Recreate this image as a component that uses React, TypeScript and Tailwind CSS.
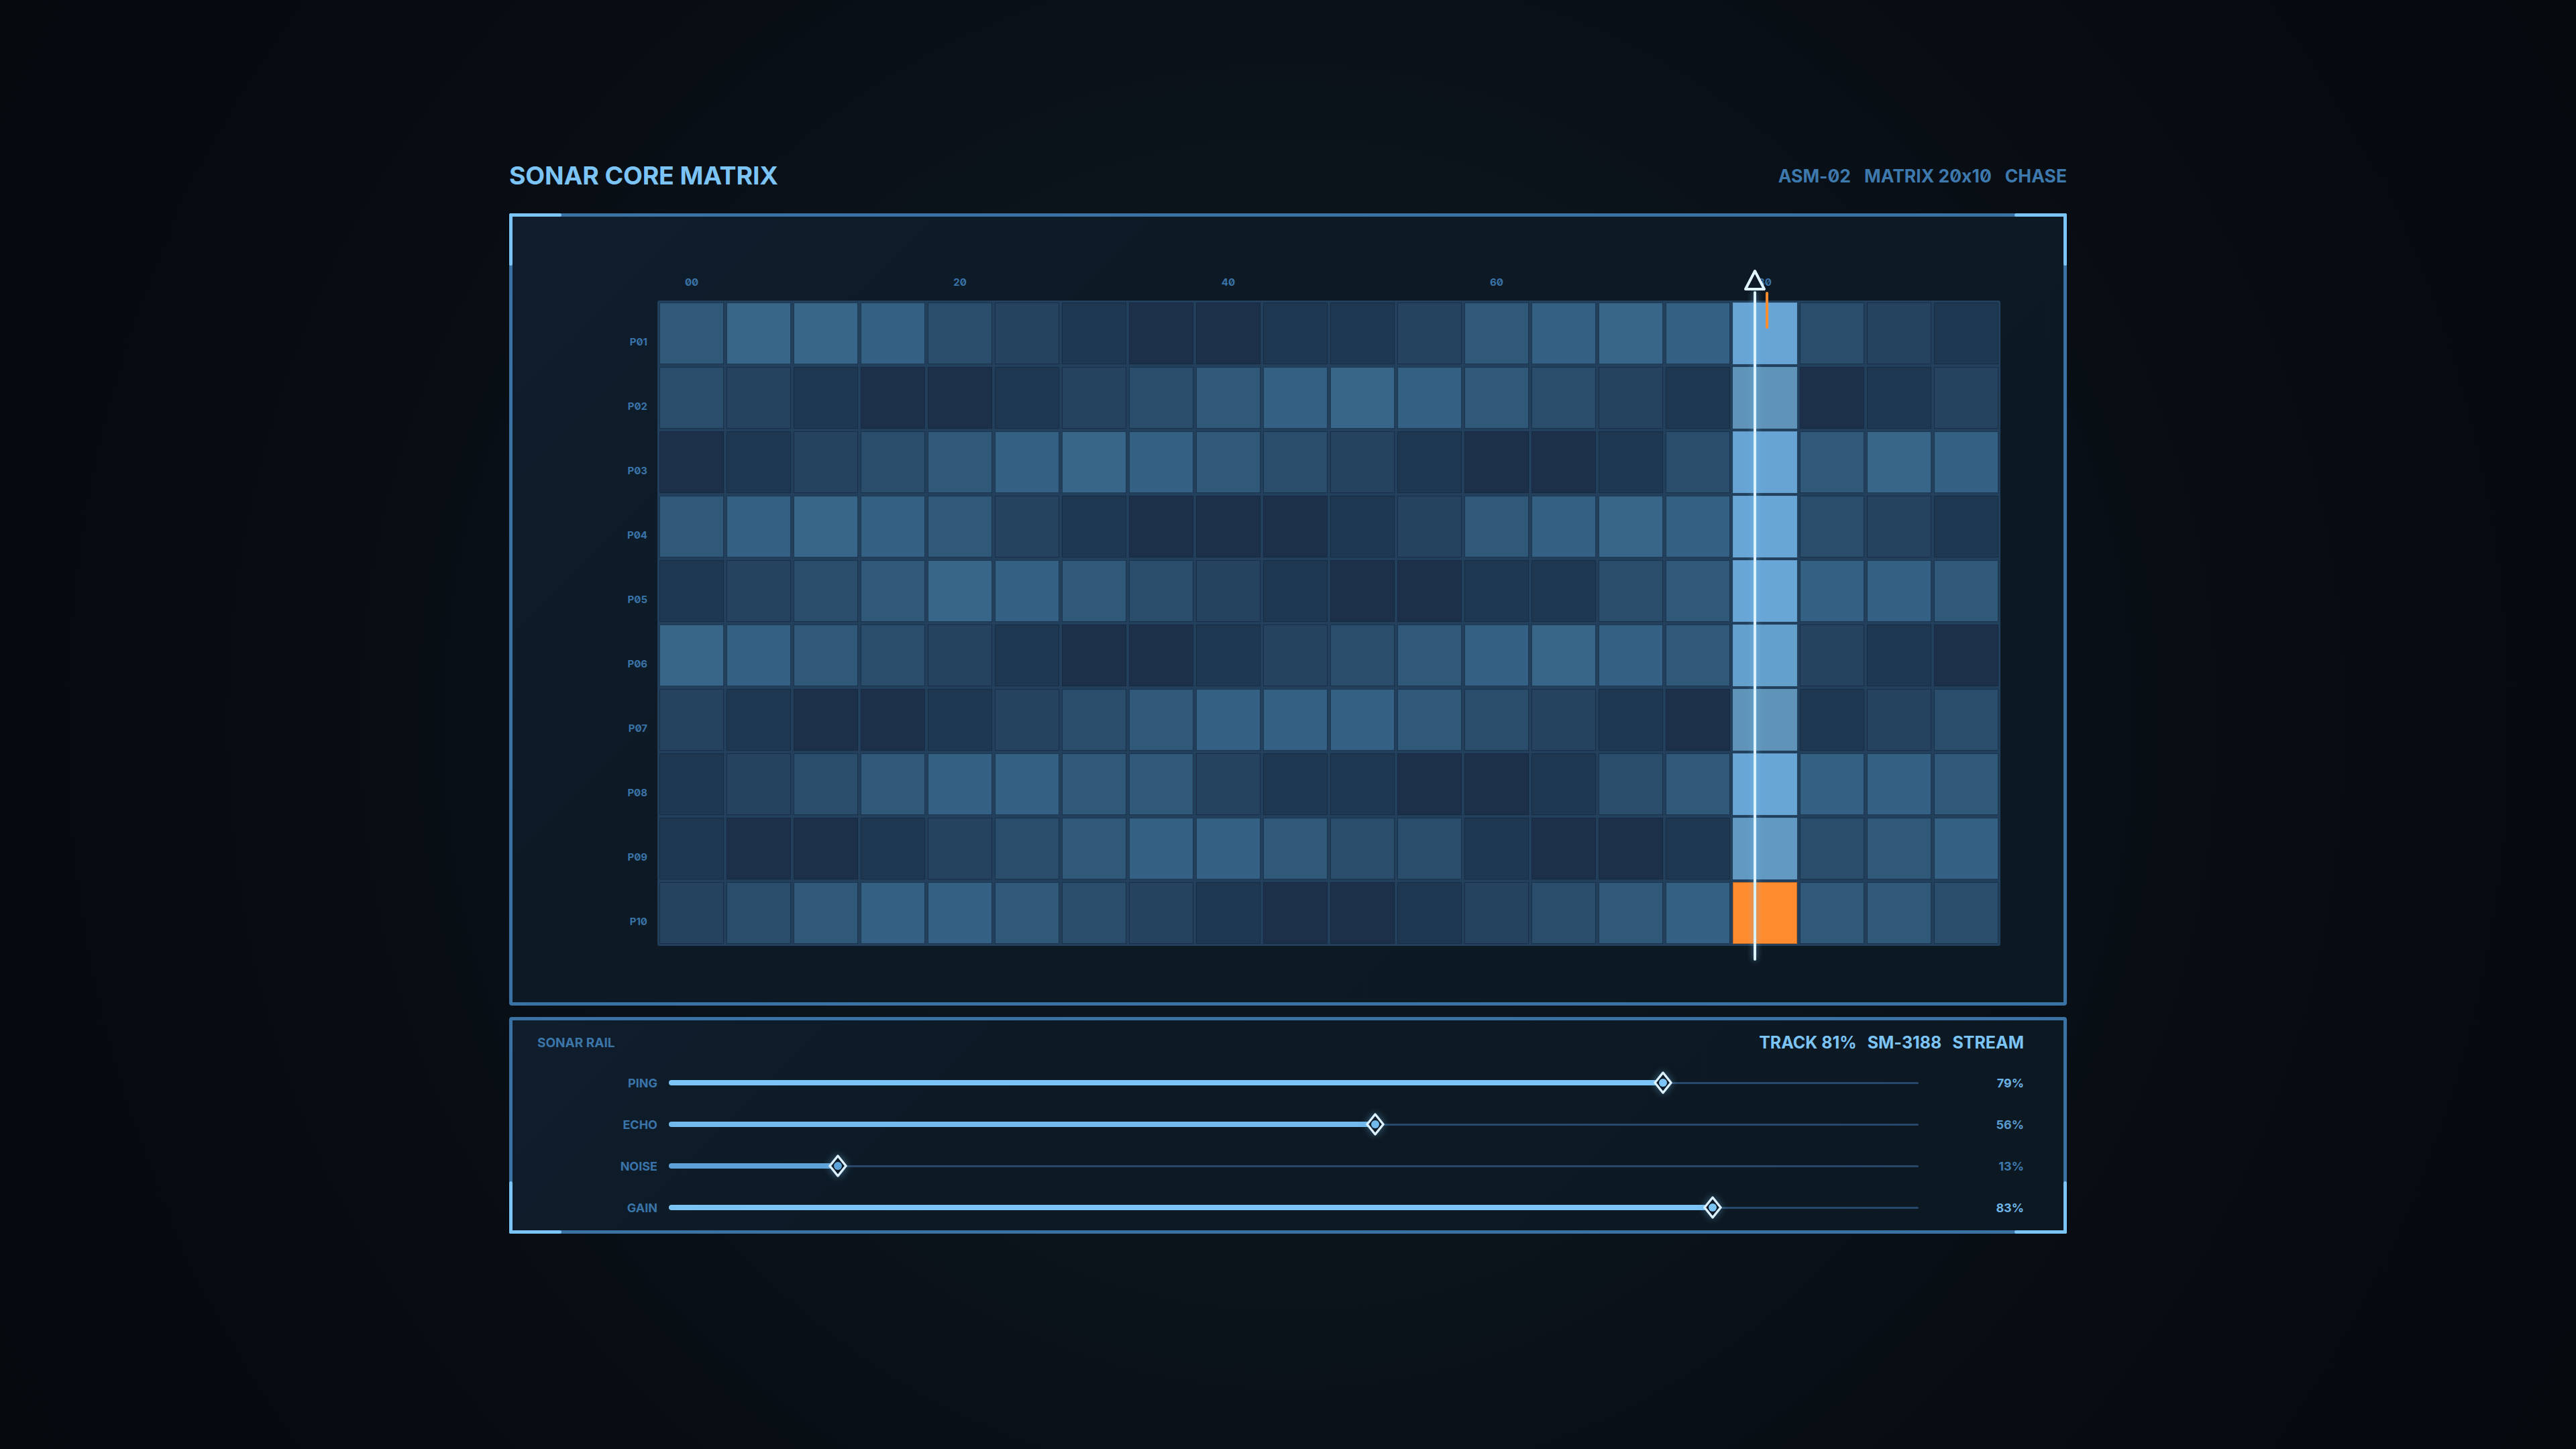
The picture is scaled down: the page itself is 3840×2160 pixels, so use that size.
import React from 'react';

// brightness steps for the matrix cells, darkest -> brightest
const levelClasses = [
    'bg-[#1c3049]',
    'bg-[#1f3852]',
    'bg-[#25425f]',
    'bg-[#2a4d6c]',
    'bg-[#305878]',
    'bg-[#346083]',
    'bg-[#386688]',
];

const HEAD_COL = 16;

// colour of the playhead column, row by row (last one is the hit)
const headClasses = [
    'bg-[#68a5d5]',
    'bg-[#5f94b8]',
    'bg-[#67a4d4]',
    'bg-[#68a6d6]',
    'bg-[#68a6d6]',
    'bg-[#64a0cc]',
    'bg-[#5f94b8]',
    'bg-[#68a6d6]',
    'bg-[#6199c2]',
    'bg-[#ff8c2e]',
];

const matrix: number[][] = [
    [4, 6, 6, 5, 3, 2, 1, 0, 0, 1, 1, 2, 4, 5, 6, 5, 0, 3, 2, 1],
    [3, 2, 1, 0, 0, 1, 2, 3, 4, 5, 6, 5, 4, 3, 2, 1, 0, 0, 1, 2],
    [0, 1, 2, 3, 4, 5, 6, 5, 4, 3, 2, 1, 0, 0, 1, 3, 0, 4, 6, 5],
    [4, 5, 6, 5, 4, 2, 1, 0, 0, 0, 1, 2, 4, 5, 6, 5, 0, 3, 2, 1],
    [1, 2, 3, 4, 6, 5, 4, 3, 2, 1, 0, 0, 1, 1, 3, 4, 0, 5, 5, 4],
    [6, 5, 4, 3, 2, 1, 0, 0, 1, 2, 3, 4, 5, 6, 5, 4, 0, 2, 1, 0],
    [2, 1, 0, 0, 1, 2, 3, 4, 5, 5, 5, 4, 3, 2, 1, 0, 0, 1, 2, 3],
    [1, 2, 3, 4, 5, 5, 4, 4, 2, 1, 1, 0, 0, 1, 3, 4, 0, 5, 5, 4],
    [1, 0, 0, 1, 2, 3, 4, 5, 5, 4, 3, 3, 1, 0, 0, 1, 0, 3, 4, 5],
    [2, 3, 4, 5, 5, 4, 3, 2, 1, 0, 0, 1, 2, 3, 4, 5, 0, 4, 4, 3],
];

const rails = [
    { name: 'PING', value: 79, fill: 'bg-[#7cc4f5]', dot: '#7cc4f5', text: 'text-[#6cb2e4]' },
    { name: 'ECHO', value: 56, fill: 'bg-[#72b9ec]', dot: '#72b9ec', text: 'text-[#5a9bd0]' },
    { name: 'NOISE', value: 13, fill: 'bg-[#5ea2da]', dot: '#5ea2da', text: 'text-[#3f78ab]' },
    { name: 'GAIN', value: 83, fill: 'bg-[#7cc4f5]', dot: '#7cc4f5', text: 'text-[#6fb5e8]' },
];

function Thumb({ color }: { color: string }) {
    return (
        <svg width="30" height="36" viewBox="0 0 30 36" className="drop-shadow-[0_0_6px_rgba(124,196,245,0.45)]">
            <polygon points="15,3 27,18 15,33 3,18" fill="#0e1b28" stroke="#dcf1ff" strokeWidth="3.5" strokeLinejoin="round" />
            <circle cx="15" cy="18" r="6" fill={color} />
        </svg>
    );
}

export default function App() {
    return (
        <div className="min-h-screen w-full bg-[radial-gradient(circle_at_50%_50%,#0f1821_0%,#0b131b_38%,#080d13_65%,#06090e_100%)] font-[Inter,'Noto_Sans',sans-serif] font-bold [font-feature-settings:'zero'_1,'calt'_0]">
            <div className="mx-auto w-[2322px] pt-[242px]">
                {/* Header */}
                <header className="flex h-[40px] items-center justify-between">
                    <h1 className="text-[37.5px] leading-none tracking-[-0.005em] text-[#7cc4f5]">SONAR CORE MATRIX</h1>
                    <div className="flex items-center gap-[20px] text-[26.5px] leading-none text-[#3e79ad]">
                        <span>ASM-02</span>
                        <span>MATRIX 20x10</span>
                        <span>CHASE</span>
                    </div>
                </header>

                {/* Matrix frame */}
                <section className="relative mt-[36px] rounded-[4px] border-[5px] border-[#3a72a3] bg-[linear-gradient(135deg,#0f1d2d_0%,#0d1a25_35%,#0c1822_100%)] pb-[84px] pl-[141px] pt-[88px]">
                    <div className="absolute -left-[5px] -top-[5px] h-[5px] w-[78px] rounded-[3px] bg-[#7cc4f5]" />
                    <div className="absolute -left-[5px] -top-[5px] h-[78px] w-[5px] rounded-[3px] bg-[#7cc4f5]" />
                    <div className="absolute -right-[5px] -top-[5px] h-[5px] w-[78px] rounded-[3px] bg-[#7cc4f5]" />
                    <div className="absolute -right-[5px] -top-[5px] h-[78px] w-[5px] rounded-[3px] bg-[#7cc4f5]" />

                    <div className="flex items-start gap-[15px]">
                        {/* Row labels (sit a little below the row centre) */}
                        <div className="flex w-[60px] translate-y-[13px] flex-col gap-[4px] pt-[40px] text-[15px] text-[#3a74a8]">
                            {matrix.map((_, r) => (
                                <div key={r} className="flex h-[92px] items-center justify-end">
                                    P{String(r + 1).padStart(2, '0')}
                                </div>
                            ))}
                        </div>

                        <div className="relative">
                            {/* Column labels */}
                            <div className="mb-[17px] flex h-[20px] gap-[4px] px-[3px] text-[15px] leading-[20px] text-[#3a74a8]">
                                {matrix[0].map((_, c) => (
                                    <div key={c} className="w-[96px] text-center">
                                        {c % 4 === 0 ? String(c * 5).padStart(2, '0') : ''}
                                    </div>
                                ))}
                            </div>

                            {/* Cells */}
                            <div className="flex flex-col gap-[4px] rounded-[3px] bg-[#22405c] p-[3px]">
                                {matrix.map((row, r) => (
                                    <div key={r} className="flex gap-[4px]">
                                        {row.map((lvl, c) => (
                                            <div
                                                key={c}
                                                className={`h-[92px] w-[96px] border ${
                                                    c === HEAD_COL
                                                        ? `${headClasses[r]} ${r === 9 ? 'border-[#c96a22]' : 'border-[#5a8fb6]/40'}`
                                                        : `${levelClasses[lvl]} border-[#14263a]/70`
                                                }`}
                                            />
                                        ))}
                                    </div>
                                ))}
                            </div>

                            {/* Playhead */}
                            <div className="absolute left-[1652px] top-[24px] h-[55px] w-[4px] rounded-full bg-[#ff8c2e]" />
                            <div className="absolute left-[1634px] top-[23px] h-[998px] w-[4px] rounded-full bg-[#dcf2ff] shadow-[0_0_10px_rgba(124,196,245,0.7)]" />
                            <svg width="34" height="34" viewBox="0 0 34 34" className="absolute left-[1619px] -top-[11px]">
                                <polygon points="17,4 31,31 3,31" fill="#0d1a26" stroke="#e0f4ff" strokeWidth="4" strokeLinejoin="round" />
                            </svg>
                        </div>
                    </div>
                </section>

                {/* Sonar rail */}
                <section className="relative mt-[17px] rounded-[4px] border-[5px] border-[#3a72a3] bg-[linear-gradient(135deg,#0f1d2d_0%,#0d1a25_35%,#0c1822_100%)] pb-[3px] pl-[37px] pr-[59px] pt-[21px]">
                    <div className="absolute -bottom-[5px] -left-[5px] h-[5px] w-[78px] rounded-[3px] bg-[#7cc4f5]" />
                    <div className="absolute -bottom-[5px] -left-[5px] h-[78px] w-[5px] rounded-[3px] bg-[#7cc4f5]" />
                    <div className="absolute -bottom-[5px] -right-[5px] h-[5px] w-[78px] rounded-[3px] bg-[#7cc4f5]" />
                    <div className="absolute -bottom-[5px] -right-[5px] h-[78px] w-[5px] rounded-[3px] bg-[#7cc4f5]" />

                    <div className="flex h-[26px] items-center justify-between">
                        <span className="text-[19px] text-[#3c76a9]">SONAR RAIL</span>
                        <div className="flex items-center gap-[16px] text-[25px] text-[#7cc4f5]">
                            <span>TRACK 81%</span>
                            <span>SM-3188</span>
                            <span>STREAM</span>
                        </div>
                    </div>

                    <div className="mt-[15px] flex flex-col">
                        {rails.map(rail => (
                            <div key={rail.name} className="flex h-[62px] items-center">
                                <div className="w-[179px] text-right text-[18px] text-[#3a74a8]">{rail.name}</div>
                                <div className="relative ml-[17px] h-[36px] flex-1">
                                    <div className="absolute inset-x-0 top-[17px] h-[3px] rounded-full bg-[#27486a]" />
                                    <div
                                        className={`absolute left-0 top-[14px] h-[8px] rounded-full ${rail.fill}`}
                                        style={{ width: `calc(${rail.value}% + 10px)` }}
                                    />
                                    <div
                                        className="absolute top-0 -translate-x-1/2"
                                        style={{ left: `calc(${rail.value}% + 10px)` }}
                                    >
                                        <Thumb color={rail.dot} />
                                    </div>
                                </div>
                                <div className={`ml-[77px] w-[80px] text-right text-[18px] ${rail.text}`}>{rail.value}%</div>
                            </div>
                        ))}
                    </div>
                </section>
            </div>
        </div>
    );
}
